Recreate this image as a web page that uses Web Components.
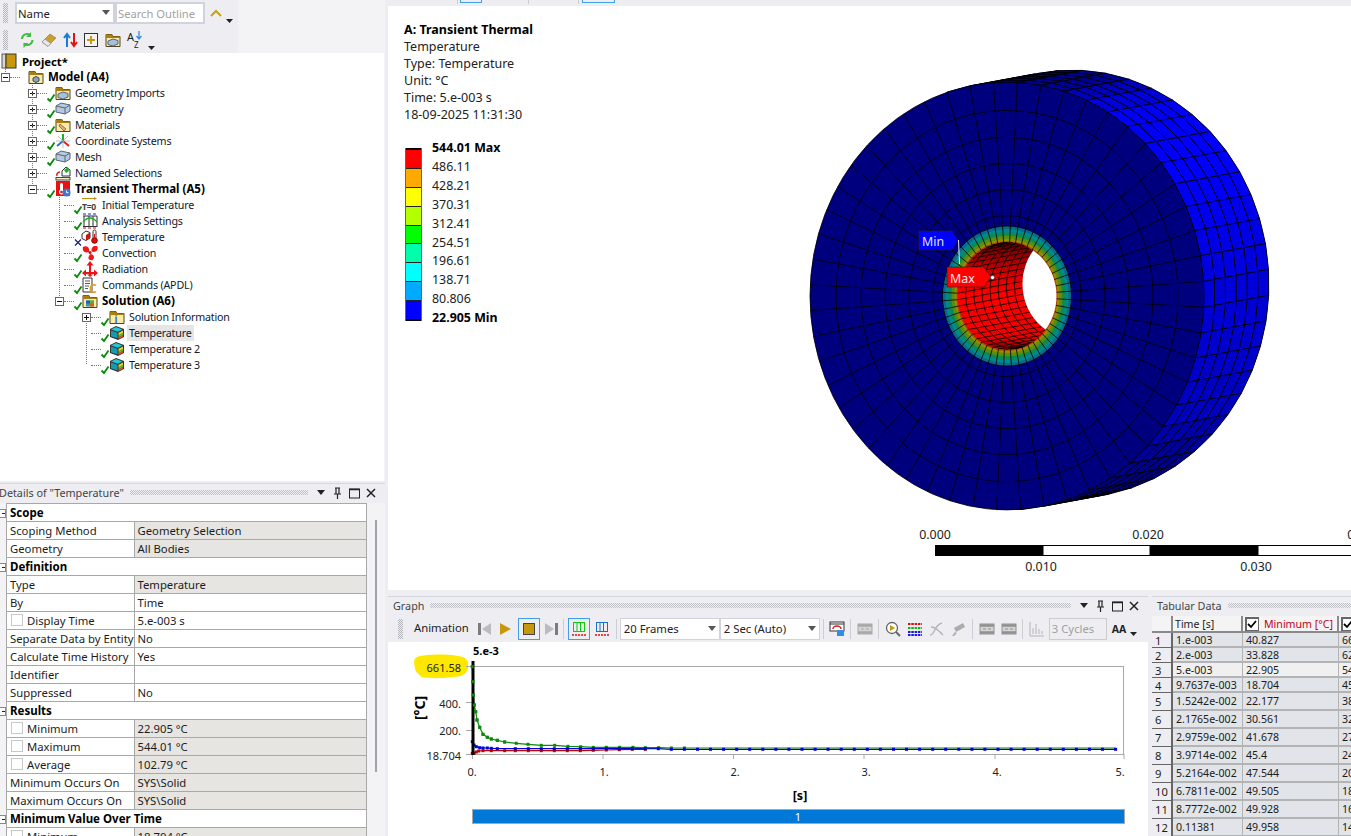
<!DOCTYPE html>
<html>
<head>
<meta charset="utf-8">
<title>Mechanical</title>
<style>
  html, body { margin: 0; background: #eeeef2; }
  body { width: 1351px; height: 836px; overflow: hidden; font: 11.3px "Noto Sans", "Open Sans", sans-serif; color: #1a1a1a; }
</style>
</head>
<body>
<mech-app></mech-app>
<script>
const svg16 = (inner, w = 16, h = 16) => `<svg viewBox="0 0 ${w} ${h}" width="${w}" height="${h}" style="display:block;overflow:visible">${inner}</svg>`

const folder = inner => `<path d="M1 2.5h6l1 2h7v10H1z" fill="#fbeaa8" stroke="#4f4520"/><path d="M1 2.5h6l1 2h7v1.5H1z" fill="#a9800f"/>${inner}`
const box = `<path d="M1 5l5-3 9 2v6l-5 3-9-2z" fill="#b6cadf" stroke="#56657a"/><path d="M1 5l9 2 5-3M10 7v6" fill="none" stroke="#56657a"/>`
const cube = `<path d="M1 4l6-3 8 3v8l-6 3-8-3z" fill="#333"/><path d="M2 4.5l5-2.5 6.5 2.5-4.5 2.3z" fill="#20c8d8"/><path d="M2 5.5l6.5 2.3v5.7L2 11.2z" fill="#1a9ab0"/><path d="M9.5 7.7l4.5-2.3v2.5l-4.5 2.3z" fill="#e8d020"/><path d="M9.5 10.2l4.5-2.3v2l-4.500 2.3z" fill="#60c030"/><path d="M9.5 12.2l4.5-2.3v1.800l-4.5 2.2z" fill="#e05020"/>`

const ICONS = {
  book: `<rect x="1" y="1" width="4" height="14" fill="#d8d8d8" stroke="#555"/><rect x="5" y="1" width="10" height="14" fill="#c8980c" stroke="#333"/>`,
  model: folder(`<path d="M5 9l3-1.5 3 1.5v3l-3 1.5-3-1.5z" fill="#8ca4bc" stroke="#3c4a5c"/>`),
  imports: folder(`<path d="M3 9l5-2 5 1.5v3.5l-5 2-5-1.5z" fill="#a8c0dc" stroke="#56657a"/>`),
  box,
  materials: folder(`<path d="M5 7l6 5-2 2-5-5z" fill="#e0b080" stroke="#a07040"/>`),
  axes: `<path d="M8 8V1" stroke="#20b020" stroke-width="2"/><path d="M8 8L2 13" stroke="#3070d0" stroke-width="2"/><path d="M8 8l6 5" stroke="#e02020" stroke-width="2"/><path d="M8 8L3 3M8 8l5-5M8 8v7M1 8h14" stroke="#9aa" stroke-width=".7"/>`,
  named: `<path d="M7 6l4-4 4 3v6H7z" fill="#fff" stroke="#333"/><path d="M9 5l4-3 1 4-3 2z" fill="#20a830"/><path d="M2 11a3 3 0 0 1 3-4" fill="none" stroke="#d02020" stroke-width="1.5"/><rect x="1" y="12.5" width="14" height="2.5" fill="#f6f0d0" stroke="#444"/>`,
  thermal: `<rect x="1" y="0" width="14" height="15" fill="#e81010"/><rect x="5" y="2" width="3" height="8" rx="1.5" fill="#fff"/><circle cx="6.5" cy="11" r="2.5" fill="#fff"/><circle cx="6.5" cy="11" r="1.3" fill="#e81010"/><circle cx="11.5" cy="11.5" r="4" fill="#3a78d8"/><path d="M11.5 9.5v2.2h2" stroke="#fff" fill="none"/>`,
  tzero: `<path d="M0 1.5h13" stroke="#c89010" stroke-width="1.2"/><path d="M12 0l3 1.5-3 1.5z" fill="#c89010"/><text x="0" y="13" font-size="8.5" font-weight="700" font-family="Noto Sans" fill="#444">T=0</text>`,
  settings: `<path d="M2 3v11M7 3v11M11 3v11M15 3v11M1 3h14M1 13.5h14" fill="none" stroke="#333"/><path d="M1 9q7-8 14 0" fill="none" stroke="#18b018" stroke-width="1.3"/><path d="M1 1h3M6 1h3M11 1h3" stroke="#2020d0"/><path d="M1 15h3M6 15h3M11 15h3" stroke="#d81010"/>`,
  tempLoad: `<path d="M0 5l4-3 4 1.5v5.5l-4 2.5-4-2z" fill="#fff" stroke="#333"/><path d="M4 6l4-2.5v5.5l-4 2.5z" fill="#d81010"/><rect x="11" y="1" width="3" height="9" rx="1.5" fill="#fff" stroke="#333"/><circle cx="12.5" cy="11.5" r="2.8" fill="#d81010" stroke="#8a0000"/><rect x="12" y="5" width="1" height="5" fill="#d81010"/>`,
  fan: `<circle cx="8" cy="7.5" r="1.5" fill="#d01010"/><path d="M7 7C2.5 8.500 0 6 1 2 4 0 8 2 7 7z" fill="#f01818"/><path d="M9.5 6.5C9 2 12 0 15.5 1.5 16.5 5 14 8 9.5 6.5z" fill="#f01818"/><path d="M8.5 9c4 1 4.5 4 2 6-3.5 1-6-2-2-6z" fill="#f01818"/>`,
  radiation: `<path d="M8 0L4.5 4.5H7v6.5H4V8.5L0 12l4 3.5V13h3v.5H5l3 2.5 3-2.5H9V13h3v2.5l4-3.5-4-3.5V11H9V4.5h2.5z" fill="#ee1414"/>`,
  commands: `<path d="M1 1h9v14H1z" fill="#fff" stroke="#333"/><path d="M3 4h5M3 6.5h5M3 9h4M3 11.5h3" stroke="#555"/><text x="7" y="15.5" font-size="12" font-weight="700" font-family="Noto Sans" fill="#d8a020">C</text>`,
  solution: folder(`<rect x="4" y="7.5" width="8" height="6" fill="#30a0a0"/><path d="M4 7.5h4v3H4z" fill="#2060c8"/><path d="M8 10.5h4v3H8z" fill="#d86020"/><path d="M8 7.5h4v3H8z" fill="#60b030"/>`),
  info: folder(`<text x="5.5" y="14" font-size="10" font-weight="700" font-family="Noto Sans" fill="#3070d0">i</text>`),
  cube
}

const CHECK = `<svg viewBox="0 0 8 8" width="8" height="8" style="display:block;overflow:visible"><path d="M.5 4.5L3 7 7.5 .5" fill="none" stroke="#0b8a0b" stroke-width="1.8"/></svg>`
const CROSS = `<svg viewBox="0 0 8 8" width="8" height="8" style="display:block;overflow:visible"><path d="M1 1.5L7 7.5M7 1.5L1 7.5" fill="none" stroke="#14206e" stroke-width="1.2"/></svg>`

class DockHeader extends HTMLElement {
  constructor() {
    super()
    this.attachShadow({mode: 'open'}).innerHTML = `
      <style>
        :host { display: flex; flex: none; align-items: center; height: 20px; background: #eeeef2; color: #444; box-sizing: border-box; border-top: 1px solid #d6d6e0; }
        .title { padding: 0 0 2px var(--title-pad, 5px); white-space: nowrap; font-size: 10.8px; }
        .grip { flex: 1; height: 5px; margin: 0 8px 2px 6px; background: conic-gradient(#c2c2ca 25%, transparent 0 50%, #c2c2ca 0 75%, transparent 0) 0 0 / 2px 2px; }
        .btns { display: flex; align-items: center; gap: 6px; padding: 0 9px 2px 0; }
      </style>
      <span class="title"><slot></slot></span>
      <span class="grip"></span>
      <span class="btns">
        ${svg16(`<path d="M1 3h8L5 8z" fill="#222"/>`, 10, 12)}
        ${svg16(`<path d="M3 1h5M4 1v6M7 1v6M2 7h7M5.5 7v5" stroke="#222" fill="none" stroke-width="1.2"/>`, 11, 12)}
        ${svg16(`<rect x=".5" y="2" width="10" height="9" fill="none" stroke="#222"/><path d="M.5 2.5h10" stroke="#222" stroke-width="1.5"/>`, 11, 12)}
        ${svg16(`<path d="M1 2l8 8M9 2l-8 8" stroke="#222" stroke-width="1.5"/>`, 10, 12)}
      </span>`
  }
}
customElements.define('dock-header', DockHeader)

class OutlineToolbar extends HTMLElement {
  constructor() {
    super()
    this.attachShadow({mode: 'open'}).innerHTML = `
      <style>
        :host { display: block; background: #f3f3f6; height: 53px; box-sizing: border-box; }
        .row { display: flex; align-items: center; height: 26px; width: 238px; background: #eeeef2; }
        .grip { width: 5px; height: 20px; margin: 0 7px 0 3px; background: conic-gradient(#b4b4bc 25%, transparent 0 50%, #b4b4bc 0 75%, transparent 0) 0 0 / 2px 2px; }
        .combo { box-sizing: border-box; height: 22px; width: 100px; background: #fff; border: 2px solid #d0d2dc; display: flex; align-items: center; padding: 0 1px; position: relative; }
        .combo i { position: absolute; right: 3px; top: 6px; border: 4px solid transparent; border-top: 5px solid #555; }
        .search { width: 90px; color: #a2a2a2; white-space: nowrap; font-size: 11.2px; }
        .chev { margin-left: 5px; }
        .drop { align-self: flex-end; margin: 0 0 3px 4px; }
        .second { height: 27px; }
        .second svg { margin-right: 6px; }
        .second .drop { margin: 0 0 3px -3px; }
      </style>
      <div class="row">
        <span class="grip"></span>
        <span class="combo">Name<i></i></span>
        <span class="combo search">Search Outline</span>
        <span class="chev">${svg16(`<path d="M1 7l5-5 5 5" fill="none" stroke="#c8a018" stroke-width="2"/>`, 12, 9)}</span>
        <span class="drop">${svg16(`<path d="M0 0h7L3.5 4z" fill="#222"/>`, 7, 4)}</span>
      </div>
      <div class="row second">
        <span class="grip" style="margin-right:12px"></span>
        ${svg16(`<path d="M2 7a5 5 0 0 1 8.5-3.500M12.500 8a5 5 0 0 1-8.5 3.5" fill="none" stroke="#46b846" stroke-width="2"/><path d="M11 0v5H6zM3.5 16v-5h5z" fill="#46b846"/>`, 15, 16)}
        ${svg16(`<path d="M1 10L9 2l6 4-8 8z" fill="#c8a030" stroke="#9a7a20" stroke-width=".6"/><path d="M1 10l3-3 6 4.5-3 3z" fill="#e8e8e8" stroke="#999"/>`, 16, 16)}
        ${svg16(`<path d="M4 15V3M1 6l3-4 3 4" fill="none" stroke="#1c7ad8" stroke-width="2"/><path d="M11 1v12M8 10l3 4 3-4" fill="none" stroke="#e01414" stroke-width="2"/>`, 15, 16)}
        ${svg16(`<rect x=".5" y="1.5" width="13" height="13" fill="#f4f4f4" stroke="#333"/><path d="M7 4v8M3 8h8" stroke="#c89810" stroke-width="2"/>`, 15, 16)}
        ${svg16(ICONS.imports, 16, 16)}
        <svg viewBox="0 0 18 18" width="18" height="18" style="overflow:visible"><text x="0" y="10" font-size="11" font-family="Noto Sans" fill="#222">A</text><text x="7" y="17" font-size="8" font-family="Noto Sans" fill="#222">Z</text><path d="M12 0v7M9.5 5l2.5 3 2.5-3" fill="none" stroke="#3a88d8" stroke-width="1.3"/></svg>
        <span class="drop">${svg16(`<path d="M0 0h7L3.5 4z" fill="#222"/>`, 7, 4)}</span>
      </div>`
  }
}
customElements.define('outline-toolbar', OutlineToolbar)

class TreeRow extends HTMLElement {
  constructor() {
    super()
    this.attachShadow({mode: 'open'}).innerHTML = `
      <style>
        :host { display: flex; align-items: center; height: 16px; white-space: nowrap; color: #11182a; font-size: 10.7px; letter-spacing: -.2px; }
        .exp { box-sizing: border-box; width: 9px; height: 9px; border: 1px solid #666; background: #fff; position: relative; flex: none; }
        .exp.none { border: 0; background: none; }
        .exp b { position: absolute; left: 1px; right: 1px; top: 3px; height: 1px; background: #111; }
        .exp.plus i { position: absolute; top: 1px; bottom: 1px; left: 3px; width: 1px; background: #111; }
        .dots { width: 10px; flex: none; border-top: 1px dotted #777; }
        .mark { width: 8px; height: 8px; flex: none; align-self: flex-end; margin-bottom: -1px; }
        .icon { width: 16px; height: 16px; flex: none; }
        .label { margin-left: 2px; padding: 0 2px; line-height: 16px; }
        :host([bold]) .label { font-weight: 700; color: #000; font-size: 11.5px; letter-spacing: 0; }
        :host([selected]) .label { background: #e6e6e6; }
      </style>
      <span class="exp"><b></b><i></i></span><span class="dots"></span><span class="mark"></span><span class="icon"></span><span class="label"><slot></slot></span>`
  }

  connectedCallback() {
    const level = +this.getAttribute('level')
    const exp = this.shadowRoot.querySelector('.exp')
    const state = this.getAttribute('exp')
    this.style.paddingLeft = (level * 27 + 1) + 'px'
    if (state === 'plus') exp.classList.add('plus')
    if (!state) {
      exp.classList.add('none')
      exp.innerHTML = ''
    }
    const mark = this.getAttribute('mark')
    this.shadowRoot.querySelector('.mark').innerHTML = mark === 'ok' ? CHECK : mark === 'x' ? CROSS : ''
    this.shadowRoot.querySelector('.icon').innerHTML = svg16(ICONS[this.getAttribute('icon')])
  }
}
customElements.define('tree-row', TreeRow)

class OutlineTree extends HTMLElement {
  constructor() {
    super()
    const rows = [
      [0, 'minus', '', 'model', 'Model (A4)', 'bold'],
      [1, 'plus', 'ok', 'imports', 'Geometry Imports'],
      [1, 'plus', 'ok', 'box', 'Geometry'],
      [1, 'plus', 'ok', 'materials', 'Materials'],
      [1, 'plus', 'ok', 'axes', 'Coordinate Systems'],
      [1, 'plus', 'ok', 'box', 'Mesh'],
      [1, 'plus', '', 'named', 'Named Selections'],
      [1, 'minus', 'ok', 'thermal', 'Transient Thermal (A5)', 'bold'],
      [2, '', 'ok', 'tzero', 'Initial Temperature'],
      [2, '', 'ok', 'settings', 'Analysis Settings'],
      [2, '', 'x', 'tempLoad', 'Temperature'],
      [2, '', 'ok', 'fan', 'Convection'],
      [2, '', 'ok', 'radiation', 'Radiation'],
      [2, '', 'ok', 'commands', 'Commands (APDL)'],
      [2, 'minus', 'ok', 'solution', 'Solution (A6)', 'bold'],
      [3, 'plus', 'ok', 'info', 'Solution Information'],
      [3, '', 'ok', 'cube', 'Temperature', 'selected'],
      [3, '', 'ok', 'cube', 'Temperature 2'],
      [3, '', 'ok', 'cube', 'Temperature 3']
    ]
    this.attachShadow({mode: 'open'}).innerHTML = `
      <style>
        :host { display: block; flex: 1; background: #fff; position: relative; overflow: hidden; margin-right: 1px; }
        .root { display: flex; align-items: center; height: 16px; font-weight: 700; color: #000; padding-left: 1px; }
        .root span { margin-left: 5px; }
        .guides { position: absolute; left: 0; top: 0; pointer-events: none; }
      </style>
      <div class="root">${svg16(ICONS.book)}<span>Project*</span></div>
      ${rows.map(([level, exp, mark, icon, text, flags = '']) => `<tree-row level="${level}" ${exp ? `exp="${exp}"` : ''} mark="${mark}" icon="${icon}" ${flags}>${text}</tree-row>`).join('')}
      <svg class="guides" width="385" height="330">
        <path d="M5.5 16v4M32.5 32v100M59.5 144v100M86.5 268v44" stroke="#777" stroke-dasharray="1 1" fill="none"/>
      </svg>`
  }
}
customElements.define('outline-tree', OutlineTree)

class DetailsView extends HTMLElement {
  constructor() {
    super()
    const data = [
      ['s', 'Scope'],
      ['r', 'Scoping Method', 'Geometry Selection', 'g'],
      ['r', 'Geometry', 'All Bodies', 'g'],
      ['s', 'Definition'],
      ['r', 'Type', 'Temperature', 'g'],
      ['r', 'By', 'Time'],
      ['c', 'Display Time', '5.e-003 s'],
      ['r', 'Separate Data by Entity', 'No'],
      ['r', 'Calculate Time History', 'Yes'],
      ['r', 'Identifier', ''],
      ['r', 'Suppressed', 'No'],
      ['s', 'Results'],
      ['c', 'Minimum', '22.905 °C', 'g'],
      ['c', 'Maximum', '544.01 °C', 'g'],
      ['c', 'Average', '102.79 °C', 'g'],
      ['r', 'Minimum Occurs On', 'SYS\\Solid', 'g'],
      ['r', 'Maximum Occurs On', 'SYS\\Solid', 'g'],
      ['s', 'Minimum Value Over Time'],
      ['c', 'Minimum', '18.704 °C', 'g']
    ]
    const row = ([kind, name, value, grey]) => kind === 's'
      ? `<div class="sec"><i></i>${name}</div>`
      : `<div class="name">${kind === 'c' ? '<u></u>' : ''}${name}</div><div class="val ${grey ? 'grey' : ''}">${value}</div>`
    this.attachShadow({mode: 'open'}).innerHTML = `
      <style>
        :host { display: flex; flex-direction: column; flex: none; height: 353px; background: #f3f3f6; overflow: hidden; position: relative; --title-pad: 0; }
        dock-header { margin-left: -1px; }
        .table { display: grid; flex: none; grid-template-columns: 126.5px 232.5px; grid-auto-rows: 18px; margin-left: 6px; width: 361px; box-sizing: border-box; border: 1px solid #a8a8a8; border-bottom: 0; background: #fff; }
        .table > div { box-sizing: border-box; border-bottom: 1px solid #a8a8a8; display: flex; align-items: center; padding: 0 0 1px 3px; white-space: nowrap; color: #1c1c1c; }
        .val { border-left: 1px solid #a8a8a8; }
        .grey { background: #e6e5e1; }
        .sec { grid-column: 1 / 3; font-weight: 700; color: #000 !important; position: relative; font-size: 11.5px; }
        .sec i { position: absolute; left: -10px; top: 5px; width: 7px; height: 7px; border: 1px solid #888; background: #fff; }
        .sec i::after { content: ""; position: absolute; left: 4px; top: 3px; width: 3px; height: 1px; background: #222; }
        .name u { box-sizing: border-box; width: 12px; height: 12px; border: 1px solid #c8c8c8; background: #fff; margin: 0 4px 0 1px; flex: none; }
        .scroll { position: absolute; left: 375px; top: 37px; width: 2px; height: 252px; background: #a4a4a8; }
      </style>
      <dock-header>Details of "Temperature"</dock-header>
      <div class="table">${data.map(row).join('')}</div>
      <div class="scroll"></div>`
  }
}
customElements.define('details-view', DetailsView)

class ThermalViewer extends HTMLElement {
  constructor() {
    super()
    const ticks = ['486.11', '428.21', '370.31', '312.41', '254.51', '196.61', '138.71', '80.806']
    const bands = ['#ff0000', '#ffaa00', '#ffff00', '#b4ff00', '#00ff00', '#00ffaa', '#00ffff', '#00aaff', '#0000ff']
    this.attachShadow({mode: 'open'}).innerHTML = `
      <style>
        :host { display: block; flex: 1; background: #fff; position: relative; overflow: hidden; }
        .info { padding: 15px 0 0 16px; font-size: 12.5px; line-height: 17px; color: #222; }
        .info b { color: #000; }
        .legend { display: flex; margin: 16px 0 0 17px; }
        .bar { width: 17px; margin-top: 9px; border: 1px solid #666; border-width: 0 1px; background: #000; display: flex; flex-direction: column; padding: 2px 0; box-sizing: border-box; height: 173px; }
        .bar i { flex: 1; border-bottom: 1px solid #222; }
        .bar i:last-child { border: 0; }
        .labels { margin-left: 10px; font-size: 12.4px; line-height: 18.9px; color: #222; }
        .labels b { color: #000; display: block; }
        svg { position: absolute; left: 0; top: 0; }
        svg text { font-family: "Noto Sans", sans-serif; font-size: 12.4px; }
      </style>
      <div class="info">
        <b>A: Transient Thermal</b><br>Temperature<br>Type: Temperature<br>Unit: °C<br>Time: 5.e-003 s<br>18-09-2025 11:31:30
      </div>
      <div class="legend">
        <div class="bar">${bands.map(c => `<i style="background:${c}"></i>`).join('')}</div>
        <div class="labels"><b>544.01 Max</b>${ticks.map(t => `<div>${t}</div>`).join('')}<b>22.905 Min</b></div>
      </div>
      ${this.scene()}`
  }

  // the disc is a free canvas, drawn in viewer pixels (viewer origin is 388,6)
  scene() {
    const F = [1007 - 388, 296 - 6], B = [1072 - 388, 284 - 6]
    const AR = 1.086, N = 52, A0 = 3 * Math.PI / 180
    const pt = (c, r, a) => [+(c[0] + r * Math.cos(a)).toFixed(1), +(c[1] + r * AR * Math.sin(a)).toFixed(1)]
    const ell = (c, r, fill, extra = '') => `<ellipse cx="${c[0]}" cy="${c[1]}" rx="${r}" ry="${(r * AR).toFixed(1)}" fill="${fill}" ${extra}/>`
    const lerp = (a, b, t) => [a[0] + (b[0] - a[0]) * t, a[1] + (b[1] - a[1]) * t]
    const shadeAt = [[-180, 128], [-100, 128], [-78, 146], [-58, 245], [-35, 255], [-10, 226], [15, 206], [35, 190], [48, 150], [60, 128], [180, 128]]
    const shade = deg => {
      for (let i = 1; i < shadeAt.length; i++) {
        if (deg <= shadeAt[i][0]) {
          const [d0, v0] = shadeAt[i - 1], [d1, v1] = shadeAt[i]
          return Math.round(v0 + (v1 - v0) * (deg - d0) / (d1 - d0))
        }
      }
      return 128
    }

    // outer wall
    let wall = ''
    const STEPS = 6
    for (let i = 0; i < N; i++) {
      const a = A0 + i * 2 * Math.PI / N, b = A0 + (i + 1) * 2 * Math.PI / N
      const mid = Math.atan2(Math.sin((a + b) / 2), Math.cos((a + b) / 2)) * 180 / Math.PI
      if (mid < -105 || mid > 95) continue
      for (let s = 0; s < STEPS; s++) {
        const c0 = lerp(B, F, s / STEPS), c1 = lerp(B, F, (s + 1) / STEPS)
        const pts = [pt(c0, 197, a), pt(c0, 197, b), pt(c1, 197, b), pt(c1, 197, a)]
        wall += `<polygon points="${pts.join(' ')}" fill="rgb(0,0,${shade(mid)})" stroke="#000" stroke-width=".8"/>`
      }
    }

    // front face mesh
    const rings = [64.5, 74, 98, 122, 146, 171]
    const heat = [[64.5, '#0b6a8c'], [61.5, '#008a8a'], [58.5, '#0f8a4e'], [55.5, '#5c8c10'], [52.5, '#9a8c00'], [50.5, '#a04c00']]
    let face = ell(F, 197, '#00007e', 'stroke="#000" stroke-width=".8"')
    heat.forEach(([r, c]) => { face += ell(F, r, c) })
    let lines = rings.map(r => ell(F, r, 'none', 'stroke="#000" stroke-width=".8"')).join('')
    for (let i = 0; i < N; i++) {
      const a = A0 + i * 2 * Math.PI / N
      const p = pt(F, 49.5, a), q = pt(F, 197, a)
      lines += `<line x1="${p[0]}" y1="${p[1]}" x2="${q[0]}" y2="${q[1]}" stroke="#000" stroke-width=".8"/>`
    }

    // bore: red wall seen through the front hole, white where the view passes right through
    let bore = ell(F, 49.5, 'url(#boreShade)')
    for (let s = 1; s < 8; s++) bore += ell(lerp(F, B, s / 8), 49.5, 'none', 'stroke="#000" stroke-width=".8"')
    for (let i = 0; i < N; i++) {
      const a = A0 + i * 2 * Math.PI / N
      const p = pt(F, 49.5, a), q = pt(B, 49.5, a)
      bore += `<line x1="${p[0]}" y1="${p[1]}" x2="${q[0]}" y2="${q[1]}" stroke="#000" stroke-width=".8"/>`
    }
    bore += ell(B, 49.5, '#fff')

    const ox = -388, oy = -6
    const flag = (pts, fill) => `<polygon points="${pts.map(([x, y]) => [x + ox, y + oy]).join(' ')}" fill="${fill}" stroke="#222" stroke-width=".6"/>`
    const t = (x, y, s, a = 'start') => `<text x="${x + ox}" y="${y + oy}" text-anchor="${a}" fill="#222">${s}</text>`

    return `<svg width="963" height="584">
      <defs>
        <clipPath id="boreClip">${ell(F, 49.5, '#000')}</clipPath>
        <linearGradient id="boreShade" x1="0" y1="0" x2="0" y2="1">
          <stop offset="0" stop-color="#5a0000"/><stop offset=".15" stop-color="#a00000"/><stop offset=".35" stop-color="#e40000"/><stop offset=".5" stop-color="#ff0000"/><stop offset=".88" stop-color="#f00000"/><stop offset="1" stop-color="#800000"/>
        </linearGradient>
      </defs>
      ${ell(B, 197, '#00007e')}
      ${wall}
      ${face}
      ${lines}
      <g clip-path="url(#boreClip)">${bore}</g>
      ${flag([[919, 231], [952, 231], [958, 240.5], [952, 250], [919, 250]], '#0000ff')}
      <text x="${922 + ox}" y="${246 + oy}" fill="#dfe6ff">Min</text>
      <line x1="${958.5 + ox}" y1="${240 + oy}" x2="${959.5 + ox}" y2="${264 + oy}" stroke="#e8e8ff"/>
      ${flag([[947, 267], [984, 267], [991, 277], [984, 287], [947, 287]], '#ff0000')}
      <text x="${950 + ox}" y="${283 + oy}" fill="#ffe6e6">Max</text>
      <circle cx="${992.5 + ox}" cy="${277.5 + oy}" r="2" fill="#fff" stroke="#222" stroke-width=".5"/>
      <rect x="${935 + ox}" y="${545 + oy}" width="108" height="11" fill="#000"/>
      <rect x="${1043 + ox}" y="${545.5 + oy}" width="107" height="10" fill="#fff" stroke="#000"/>
      <rect x="${1150 + ox}" y="${545 + oy}" width="108" height="11" fill="#000"/>
      <rect x="${1258 + ox}" y="${545.5 + oy}" width="108" height="10" fill="#fff" stroke="#000"/>
      ${t(935, 539, '0.000', 'middle')}${t(1148, 539, '0.020', 'middle')}${t(1363, 539, '0.040', 'middle')}
      ${t(1041, 571, '0.010', 'middle')}${t(1256, 571, '0.030', 'middle')}
    </svg>`
  }
}
customElements.define('thermal-viewer', ThermalViewer)

class AnimBar extends HTMLElement {
  constructor() {
    super()
    const film = c => svg16(`<rect x="1" y="3" width="14" height="10" fill="#d4d4d4" stroke="${c}"/><path d="M1 4.5h14M1 11.5h14" stroke="${c}" stroke-width="2.5"/><path d="M4 8h3M9 8h3" stroke="${c}"/>`)
    const bars = (c, u) => `<svg viewBox="0 0 14 16" width="14" height="16" style="display:block"><path d="M1.5 1v10M5 1v10M8.5 1v10M12.5 1v10M1 1.5h12M1 10.5h12" stroke="${c}" fill="none"/><path d="M0 14h14" stroke="${u}" stroke-width="1.5" stroke-dasharray="2 1"/></svg>`
    this.attachShadow({mode: 'open'}).innerHTML = `
      <style>
        :host { display: flex; flex: none; align-items: center; height: 26px; background: #eeeef2; white-space: nowrap; color: #222; }
        .grip { width: 5px; height: 20px; margin: 0 11px 0 10px; background: conic-gradient(#b4b4bc 25%, transparent 0 50%, #b4b4bc 0 75%, transparent 0) 0 0 / 2px 2px; }
        .sep { width: 1px; height: 20px; background: #ccced6; flex: none; }
        .on { box-sizing: border-box; width: 22px; height: 22px; border: 1px solid #3f9fe8; display: flex; align-items: center; justify-content: center; }
        .combo { box-sizing: border-box; height: 22px; width: 100px; background: #fff; border: 1px solid #d0d2dc; display: flex; align-items: center; padding: 0 0 1px 3px; position: relative; flex: none; }
        .combo i { position: absolute; right: 3px; top: 7px; border: 4px solid transparent; border-top: 5px solid #555; }
        .cyc { box-sizing: border-box; width: 58px; height: 22px; border: 1px solid #ccc; padding-left: 2px; color: #a0a0a0; line-height: 20px; flex: none; }
        .ic { display: flex; width: 16px; height: 16px; flex: none; }
        .aa { font-weight: 700; font-size: 10.5px; margin-left: 5px; }
      </style>
      <span class="grip"></span>
      <span style="margin:0 9px 3px 0">Animation</span>
      ${svg16(`<rect x="0" y="1" width="3" height="12" fill="#7c7c7c"/><path d="M13 1v12L4 7z" fill="#bcbcbc"/>`, 13, 14)}
      <span style="width:9px"></span>
      ${svg16(`<path d="M0 1l11 6-11 6z" fill="#c8980c"/>`, 11, 14)}
      <span style="width:7px"></span>
      <span class="on">${svg16(`<rect x=".5" y=".5" width="11" height="11" fill="#c8980c" stroke="#444"/>`, 12, 12)}</span>
      <span style="width:5px"></span>
      ${svg16(`<path d="M0 1v12l9-6z" fill="#bcbcbc"/><rect x="10" y="1" width="3" height="12" fill="#7c7c7c"/>`, 13, 14)}
      <span class="sep" style="margin:0 4px 0 5px"></span>
      <span class="on">${bars('#10c810', '#e01010')}</span>
      <span style="width:5px"></span>
      ${bars('#1870c8', '#e01010')}
      <span class="sep" style="margin:0 3px 0 7px"></span>
      <span class="combo">20 Frames<i></i></span>
      <span class="combo">2 Sec (Auto)<i></i></span>
      <span class="sep" style="margin-left:3px"></span>
      <span class="ic" style="margin:0 5px">${svg16(`<rect x="1" y="1" width="14" height="9" fill="#fff" stroke="#333"/><path d="M1 3h14" stroke="#333"/><path d="M4 8a4 3 0 0 1 8 0" fill="none" stroke="#d82020" stroke-width="1.5"/><rect x="8" y="9" width="7" height="6" fill="#2f8fe0"/>`)}</span>
      <span class="sep"></span>
      <span class="ic" style="margin:0 5px 0 6px">${film('#a8a8a8')}</span>
      <span class="sep"></span>
      <span class="ic" style="margin:0 6px">${svg16(`<circle cx="7" cy="7" r="5.5" fill="#fff" stroke="#666" stroke-width="1.3"/><path d="M5 4l5 3-5 3z" fill="#c8980c"/><path d="M11 11l4 4" stroke="#666" stroke-width="2"/>`)}</span>
      <span class="ic" style="margin-right:6px">${svg16(`<g stroke-width="2" stroke-dasharray="2.5 .8"><path d="M1 3h14" stroke="#e01010"/><path d="M1 7h14" stroke="#10b810"/><path d="M1 11h14" stroke="#1818e0"/><path d="M1 14h14" stroke="#1818e0"/></g>`)}</span>
      <span class="ic" style="margin-right:6px">${svg16(`<path d="M1 14C6 14 5 4 13 2M2 6c4 0 7 3 12 8" fill="none" stroke="#b4b4b4" stroke-width="1.3"/>`)}</span>
      <span class="ic" style="margin-right:5px">${svg16(`<path d="M3 7l9-5 2 4-9 5z" fill="#acacac"/><path d="M1 15l3-4 2 1-3 3z" fill="#acacac"/>`)}</span>
      <span class="sep"></span>
      <span class="ic" style="margin:0 6px">${film('#909090')}</span>
      <span class="ic" style="margin-right:5px">${film('#909090')}</span>
      <span class="sep"></span>
      <span class="ic" style="margin:0 4px 0 6px">${svg16(`<path d="M1 1v14h14M4 13V7M7 13V3M10 13V8M13 13v-3" stroke="#b4b4b4" fill="none"/>`)}</span>
      <span class="cyc">3 Cycles</span>
      <span class="aa">AA</span>
      <span style="margin:10px 0 0 4px">${svg16(`<path d="M0 0h7L3.5 4z" fill="#222"/>`, 7, 4)}</span>`
  }
}
customElements.define('anim-bar', AnimBar)

class ResultChart extends HTMLElement {
  constructor() {
    super()
    const W = 760, H = 194
    const P = ([x, y]) => [+(x / 3).toFixed(1), +(y / 3 - 2).toFixed(1)]
    const tail = (from, y) => {
      const pts = []
      for (let x = from; x < 2200; x += 39.2) pts.push([x, y])
      return pts
    }
    const green = [[253, 80], [254, 125], [256, 165], [259, 195], [263, 215], [267, 240], [275, 262], [285, 283], [298, 292], [310, 297], [328, 301], [350, 306], [385, 310], [420, 313], [460, 316], [500, 316], [540, 319], [578, 320], [616, 322], [655, 322], [695, 322], [735, 322], [772, 323], [812, 323], ...tail(850, 324)]
    const blue = [[253, 305], [258, 315], [265, 320], [275, 323], [285, 324], [298, 324], [310, 325], [328, 326], [382, 326], [421, 326], [460, 326], [499, 326], [538, 326], [577, 326], [616, 326], [655, 326], [694, 326], [733, 326], [772, 326], [811, 326], ...tail(850, 328)]
    const red = [[253, 340], [258, 340], [265, 336], [272, 333], [285, 332], [310, 332], [350, 332], [382, 332], [421, 332], [460, 332], [499, 332], [538, 332], [577, 332], [616, 331], [655, 330], [694, 329], [733, 328], [772, 328]]
    const line = (pts, c) => `<polyline points="${pts.map(P).join(' ')}" fill="none" stroke="${c}" stroke-width="1.2"/>`
    const marks = (pts, c) => pts.map(P).map(([x, y]) => `<rect x="${x - 1.5}" y="${y - 1.5}" width="3" height="3" fill="${c}"/>`).join('')
    const xLabels = [[84, '0.'], [216, '1.'], [347, '2.'], [478, '3.'], [609, '4.'], [732, '5.']]
    const xTicks = [84.5, 215, 345.5, 476, 607, 736]
    this.attachShadow({mode: 'open'}).innerHTML = `
      <style>
        :host { display: block; flex: 1; background: #fff; overflow: hidden; }
        svg { display: block; }
        text { font-family: "Noto Sans", sans-serif; font-size: 11px; fill: #222; }
        .b { font-weight: 700; fill: #000; }
      </style>
      <svg width="${W}" height="${H}">
        <path d="M29 15c9-3 29-3 41-1 9 1 11 5 10 12-1 6-6 9-16 9-13 2-25 1-31 0-1-3-6-4-6-9-1-5-2-9 2-11z" fill="#ffe800"/>
        <rect x="84.5" y="24.5" width="651" height="88" fill="#fff" stroke="#a8a8a8"/>
        <path d="M78 24.5h6M78 60.5h6M78 88.5h6M78 112.5h6" stroke="#a8a8a8"/>
        <path d="${xTicks.map(x => `M${x} 112v5`).join('')}" stroke="#a8a8a8"/>
        <text x="73" y="30" text-anchor="end">661.58</text>
        <text x="73" y="66" text-anchor="end">400.</text>
        <text x="73" y="93" text-anchor="end">200.</text>
        <text x="73" y="118" text-anchor="end">18.704</text>
        <text class="b" style="font-size:14px" transform="translate(37 66) rotate(-90)" text-anchor="middle">[°C]</text>
        ${xLabels.map(([x, s]) => `<text x="${x}" y="134" text-anchor="middle">${s}</text>`).join('')}
        <text class="b" style="font-size:12.5px" x="412" y="158" text-anchor="middle">[s]</text>
        ${line(red, '#c00000')}${marks(red, '#c00000')}
        ${line(blue, '#0000d8')}
        ${line(green, '#0a8a0a')}${marks(green.slice(0, 26), '#0a8a0a')}
        ${marks(blue, '#0000d8')}
        <rect x="83.5" y="19" width="3" height="94" fill="#000"/>
        ${marks(green.slice(0, 12), '#0a8a0a')}
        <text class="b" x="85" y="13">5.e-3</text>
        <rect x="84.5" y="167.5" width="652" height="14" fill="#0078d7" stroke="#a8a8a8"/>
        <text x="410" y="179" text-anchor="middle" style="fill:#fff">1</text>
      </svg>`
  }
}
customElements.define('result-chart', ResultChart)

class GraphPanel extends HTMLElement {
  constructor() {
    super()
    this.attachShadow({mode: 'open'}).innerHTML = `
      <style>
        :host { display: flex; flex-direction: column; width: 760px; flex: none; overflow: hidden; --title-pad: 5px; }
      </style>
      <dock-header>Graph</dock-header>
      <anim-bar></anim-bar>
      <result-chart></result-chart>`
  }
}
customElements.define('graph-panel', GraphPanel)

class TabularData extends HTMLElement {
  constructor() {
    super()
    const rows = [
      ['1.e-003', '40.827', '661.58', 15], ['2.e-003', '33.828', '625.11', 15], ['5.e-003', '22.905', '544.01', 15], ['9.7637e-003', '18.704', '454.2', 15],
      ['1.5242e-002', '22.177', '386.4', 18], ['2.1765e-002', '30.561', '324.7', 18], ['2.9759e-002', '41.678', '278.3', 18], ['3.9714e-002', '45.4', '241.6', 18],
      ['5.2164e-002', '47.544', '209.5', 18], ['6.7811e-002', '49.505', '183.9', 18], ['8.7772e-002', '49.928', '162.1', 18], ['0.11381', '49.958', '144.8', 18]
    ]
    const box = `<u>${svg16(`<path d="M2 6l3 3 5-6" fill="none" stroke="#000" stroke-width="1.8"/>`, 12, 12)}</u>`
    this.attachShadow({mode: 'open'}).innerHTML = `
      <style>
        :host { display: flex; flex-direction: column; flex: 1; overflow: hidden; --title-pad: 5px; font-size: 10.6px; }
        dock-header { width: 420px; }
        .grid { display: grid; flex: none; grid-template-columns: 21px 70px 96px 60px; background: #f0f0f0; }
        .grid > div { box-sizing: border-box; display: flex; align-items: center; padding-left: 3px; white-space: nowrap; overflow: hidden; border-right: 1px solid #b4b4b4; border-bottom: 2px solid #b4b4b4; background: #e1e4e8; color: #1c1c1c; }
        .grid > .h { height: 17px; background: #f4f4f4; border-bottom: 2px solid #8a8a8a; border-right: 2px solid #8a8a8a; padding-left: 2px; }
        .grid > .n { background: #eeeef2; border-right: 2px solid #666; border-bottom: 1px solid #666; padding-left: 3px; font-size: 11.2px; }
        .grid > .cur { background: #f0f0f0; }
        u { box-sizing: border-box; width: 14px; height: 14px; flex: none; border: 1px solid #666; border-width: 2px 1px 1px 2px; background: #fff; margin-right: 5px; display: block; text-decoration: none; }
        u svg { margin: -1px 0 0 -1px; }
        .red { color: #c00020; }
      </style>
      <dock-header>Tabular Data</dock-header>
      <div class="grid">
        <div class="h"></div><div class="h">Time [s]</div><div class="h">${box}<span class="red">Minimum [°C]</span></div><div class="h">${box}<span class="red"></span></div>
        ${rows.map(([t, a, b, h], i) => {
          const cls = i === 2 ? ' cur' : ''
          const st = `style="height:${h}px"`
          return `<div class="n" ${st}>${i + 1}</div><div class="${cls}" ${st}>${t}</div><div class="${cls}" ${st}>${a}</div><div class="${cls}" ${st}>${b}</div>`
        }).join('')}
      </div>`
  }
}
customElements.define('tabular-data', TabularData)

class MechApp extends HTMLElement {
  constructor() {
    super()
    this.attachShadow({mode: 'open'}).innerHTML = `
      <style>
        :host { display: grid; grid-template-columns: 385px 966px; width: 1351px; height: 836px; background: #eeeef2; overflow: hidden; }
        .left { display: flex; flex-direction: column; height: 836px; background: #f3f3f6; }
        .right { display: flex; flex-direction: column; height: 836px; margin-left: 3px; }
        .top { height: 6px; flex: none; position: relative; overflow: hidden; }
        .top i { position: absolute; top: 0; width: 1px; height: 4px; background: #ccced6; }
        .top b { position: absolute; top: -2px; height: 5px; box-sizing: border-box; border: 1px solid #3f9fe8; }
        .bottom { display: flex; gap: 4px; height: 240px; flex: none; margin-top: 6px; }
        .gap { height: 2px; flex: none; background: #eeeef2; }
      </style>
      <div class="left">
        <outline-toolbar></outline-toolbar>
        <outline-tree></outline-tree>
        <div class="gap"></div>
        <details-view></details-view>
      </div>
      <div class="right">
        <div class="top"><i style="left:69px"></i><b style="left:72px;width:22px"></b><i style="left:140px"></i><i style="left:190px"></i><b style="left:194px;width:33px"></b></div>
        <thermal-viewer></thermal-viewer>
        <div class="bottom"><graph-panel></graph-panel><tabular-data></tabular-data></div>
      </div>`
  }
}
customElements.define('mech-app', MechApp)
</script>
</body>
</html>
